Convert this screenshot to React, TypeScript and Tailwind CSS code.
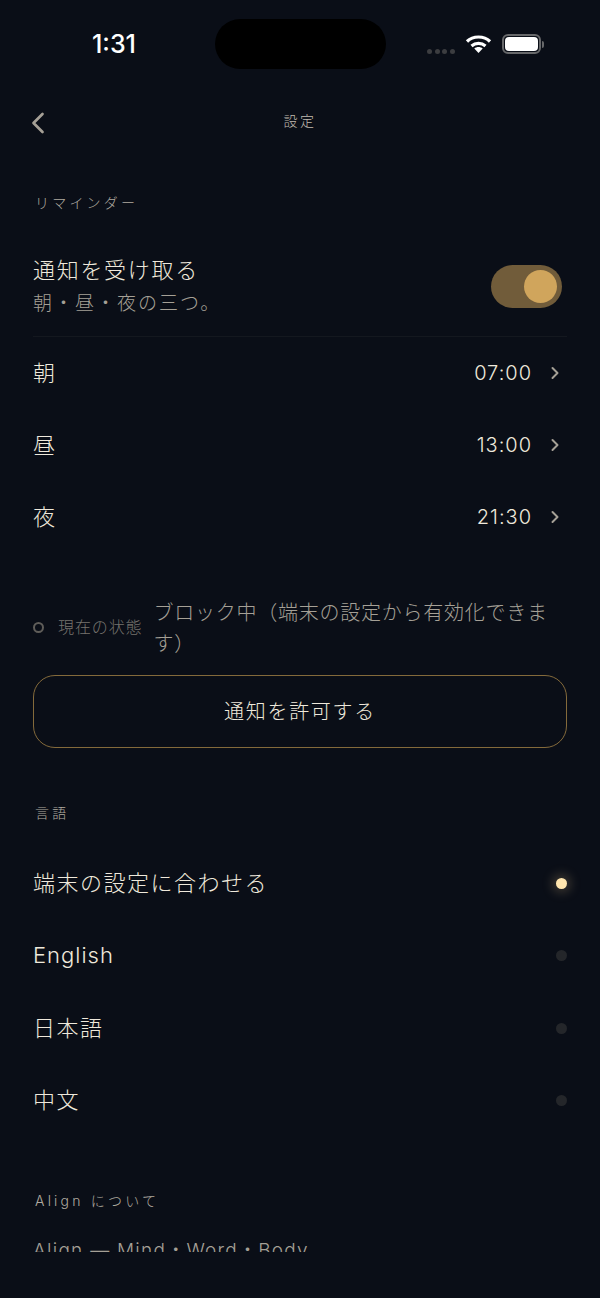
import { ChevronLeft, ChevronRight } from "lucide-react";

const font = "font-['Inter','Noto_Sans_CJK_JP',sans-serif]";

const times = [
  { label: "朝", value: "07:00" },
  { label: "昼", value: "13:00" },
  { label: "夜", value: "21:30" },
];

const languages = [
  { label: "端末の設定に合わせる", active: true, spacing: "tracking-[1.5px]" },
  { label: "English", active: false, spacing: "tracking-[1px]" },
  { label: "日本語", active: false, spacing: "tracking-[1.5px]" },
  { label: "中文", active: false, spacing: "tracking-[1.5px]" },
];

function StatusBar() {
  return (
    <div className="flex h-[88px] shrink-0 items-start pt-[19px]">
      <div className="flex h-[50px] w-[228px] items-center justify-center pt-[2px] text-[25px] font-medium text-white">
        1:31
      </div>
      <div className="ml-[-13px] h-[50px] w-[171px] rounded-[25px] bg-black" />
      <div className="ml-[41px] flex h-[50px] items-center">
        <div className="mt-[14px] flex gap-[2.5px]">
          <span className="h-[5px] w-[5px] rounded-full bg-[#3c3d40]" />
          <span className="h-[5px] w-[5px] rounded-full bg-[#3c3d40]" />
          <span className="h-[5px] w-[5px] rounded-full bg-[#3c3d40]" />
          <span className="h-[5px] w-[5px] rounded-full bg-[#3c3d40]" />
        </div>
        <svg className="ml-[10px]" width="27" height="20" viewBox="0 0 26 20" fill="none">
          <path d="M1.5 7.5C7.5 1.5 18.5 1.5 24.5 7.5" stroke="#fff" strokeWidth="3.2" />
          <path d="M6 12C10 8.6 16 8.6 20 12" stroke="#fff" strokeWidth="3.2" />
          <path d="M8.8 14.6L13 19L17.2 14.6C15 12.6 11 12.6 8.8 14.6Z" fill="#fff" />
        </svg>
        <div className="ml-[10px] flex items-center">
          <div className="h-[20px] w-[39px] rounded-[6px] border-2 border-[#67686a] p-[1px]">
            <div className="h-full w-full rounded-[4px] bg-white" />
          </div>
          <div className="ml-[1px] h-[7px] w-[2px] rounded-r-full bg-[#67686a]" />
        </div>
      </div>
    </div>
  );
}

function SectionLabel({ children }: { children: React.ReactNode }) {
  return (
    <div className="text-[14px] font-light leading-[20px] tracking-[3.2px] text-[#b0aba0]">{children}</div>
  );
}

export default function App() {
  return (
    <div className={`h-[1298px] w-[600px] overflow-hidden bg-[#0a0e17] ${font}`}>
      <StatusBar />

      <div className="h-[1164px] overflow-hidden">
        <div className="relative flex h-[66px] items-center justify-center pb-[2px]">
          <ChevronLeft className="absolute left-[20px] top-[17px] h-[36px] w-[36px] text-[#a5a096]" strokeWidth={1.8} />
          <span className="text-[14px] font-light tracking-[2.5px] text-[#c0bbb0]">設定</span>
        </div>

        <div className="px-[33px] pt-[39px]">
          <div className="pl-[2px]">
            <SectionLabel>リマインダー</SectionLabel>
          </div>

          <div className="mt-[41px] flex h-[83px] items-start justify-between border-b border-[#14181f] pr-[5px]">
            <div>
              <div className="text-[22px] font-light leading-[33px] tracking-[1.7px] text-[#efe9dc]">通知を受け取る</div>
              <div className="text-[19px] font-light leading-[33px] tracking-[2px] text-[#a5a096]">朝・昼・夜の三つ。</div>
            </div>
            <div className="mt-[11px] flex h-[43px] w-[71px] items-center justify-end rounded-full bg-[#715c3a] pr-[5px]">
              <div className="h-[33px] w-[33px] rounded-full bg-[#d0a55c]" />
            </div>
          </div>

          {times.map((t) => (
            <div key={t.label} className="flex h-[72px] items-center justify-between pr-[2px]">
              <span className="text-[22px] font-light tracking-[1px] text-[#efe9dc]">{t.label}</span>
              <div className="flex items-center">
                <span className="text-[20px] font-light tracking-[1px] text-[#efe9dc]">{t.value}</span>
                <ChevronRight className="ml-[13px] h-[20px] w-[20px] text-[#a5a096]" strokeWidth={2.4} />
              </div>
            </div>
          ))}

          <div className="mt-[45px] flex items-center">
            <span className="mb-[4px] h-[11px] w-[11px] shrink-0 rounded-full border-2 border-[#5f5d59]" />
            <span className="mb-[4px] ml-[14px] shrink-0 text-[16px] font-light tracking-[0.9px] text-[#77746e]">現在の状態</span>
            <span className="ml-[11px] text-[20px] font-light leading-[31px] tracking-[0.75px] text-[#a5a096]">
              ブロック中（端末の設定から有効化できます）
            </span>
          </div>

          <div className="mt-[15px] flex h-[73px] items-center justify-center rounded-[22px] border border-[#846a3b] text-[20px] font-light tracking-[1.7px] text-[#efe9dc]">
            通知を許可する
          </div>

          <div className="mt-[55px] pl-[2px]">
            <SectionLabel>言語</SectionLabel>
          </div>

          <div className="mt-[24px]">
            {languages.map((l) => (
              <div key={l.label} className="flex h-[72.5px] items-center justify-between">
                <span className={`text-[22px] font-light text-[#efe9dc] ${l.spacing}`}>{l.label}</span>
                {l.active ? (
                  <span className="h-[11px] w-[11px] rounded-full bg-[#ffe5ae] shadow-[0_0_12px_3px_rgba(255,220,150,0.25)]" />
                ) : (
                  <span className="h-[11px] w-[11px] rounded-full bg-[#24262a]" />
                )}
              </div>
            ))}
          </div>

          <div className="mt-[54px] pl-[2px]">
            <SectionLabel>Align について</SectionLabel>
          </div>
          <div className="mt-[26px] text-[19px] font-light tracking-[1.25px] text-[#a5a096]">Align — Mind・Word・Body</div>
        </div>
      </div>
    </div>
  );
}
